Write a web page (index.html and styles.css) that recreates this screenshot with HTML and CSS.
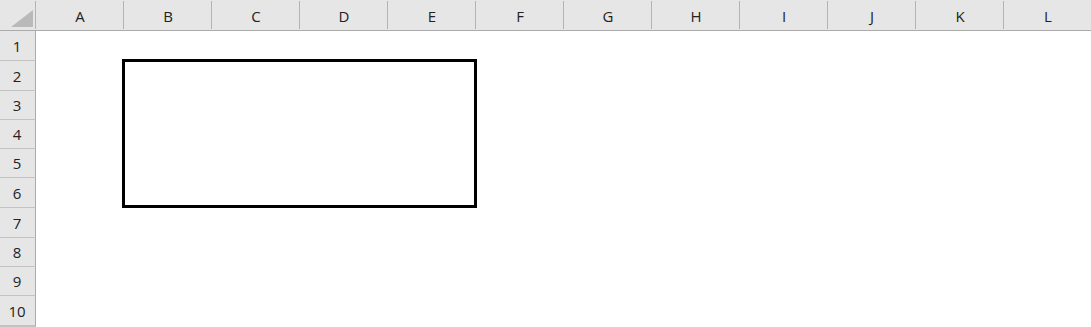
FILE: index.html
```html
<!DOCTYPE html>
<html>
<head>
    <title>Sheet1</title>
    <link rel="stylesheet" href="styles.css">
</head>
<body>
    <div class="sheet">
        <div class="corner"><span class="corner-tri"></span></div>
        <div class="col-head">A</div>
        <div class="col-head">B</div>
        <div class="col-head">C</div>
        <div class="col-head">D</div>
        <div class="col-head">E</div>
        <div class="col-head">F</div>
        <div class="col-head">G</div>
        <div class="col-head">H</div>
        <div class="col-head">I</div>
        <div class="col-head">J</div>
        <div class="col-head">K</div>
        <div class="col-head">L</div>

        <div class="row-head">1</div>
        <div class="row-head">2</div>
        <div class="row-head">3</div>
        <div class="row-head">4</div>
        <div class="row-head">5</div>
        <div class="row-head">6</div>
        <div class="row-head">7</div>
        <div class="row-head">8</div>
        <div class="row-head">9</div>
        <div class="row-head">10</div>
        <div class="row-head"></div>

        <!-- outline around B2:E6 -->
        <div class="box"></div>
    </div>
</body>
</html>
```

FILE: styles.css
```css
html, body {
    margin: 0;
    padding: 0;
    background-color: #ffffff;
    overflow: hidden;
}
.sheet {
    display: grid;
    grid-template-columns: 36px repeat(12, 88px);
    grid-template-rows: 31px 30px 30px 29px 29px 29px 30px 30px 29px 29px 30px 1px;
    width: 1091px;
    height: 327px;
    overflow: hidden;
    font-family: 'Open Sans', 'Noto Sans', sans-serif;
    font-size: 15px;
    color: #222222;
}
.corner, .col-head {
    box-sizing: border-box;
    background-color: #e6e6e6;
    border-bottom: 1px solid #ababab;
    background-image: linear-gradient(#b3b3b3, #b3b3b3);
    background-size: 1px 28px;
    background-position: right 0 top 1px;
    background-repeat: no-repeat;
}
.corner {
    display: flex;
    align-items: flex-end;
    justify-content: flex-end;
    padding: 0 3px 3px 0;
}
.corner-tri {
    width: 22px;
    height: 17px;
    background-color: #b9b9b9;
    clip-path: polygon(100% 0, 100% 100%, 0 100%);
}
.col-head {
    display: flex;
    align-items: center;
    justify-content: center;
    padding-top: 1px;
}
.row-head {
    grid-column: 1;
    box-sizing: border-box;
    display: flex;
    align-items: center;
    justify-content: center;
    padding-right: 1px;
    background-color: #e6e6e6;
    border-right: 1px solid #ababab;
    border-bottom: 1px solid #c2c2c2;
}
.box {
    grid-column: 3 / 7;
    grid-row: 3 / 8;
    margin: -2px -1px 0 -2px;
    border: 3px solid #000000;
}
```
